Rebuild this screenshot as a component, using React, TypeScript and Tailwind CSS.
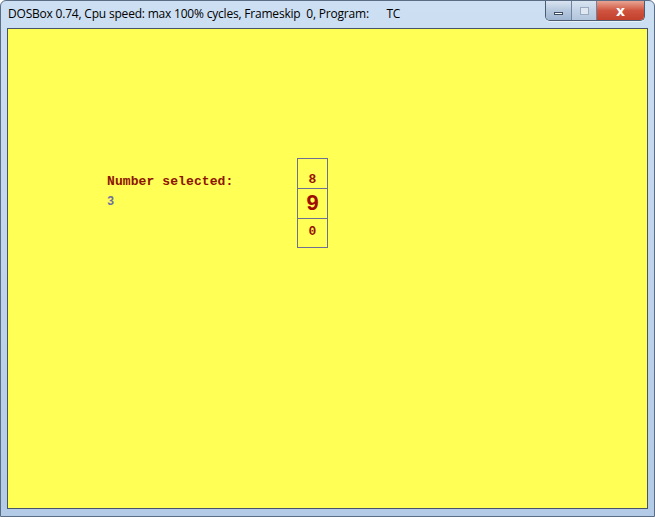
import React from "react"

const mono = { fontFamily: '"Liberation Mono", "DejaVu Sans Mono", monospace' }

function TitleButtons() {
  return (
    <div className="flex h-[20px] self-start overflow-hidden rounded-b-[5px] border border-t-0 border-[#4a5b72] shadow-[0_1px_0_#e8f0f8]">
      <div className="flex w-[26px] items-center justify-center border-r border-[#6f82a0] bg-gradient-to-b from-[#d9e4f1] via-[#b6c8de] to-[#9fb5d1]">
        <div className="mt-[5px] h-[3px] w-[9px] border border-[#3c4c63] bg-white" />
      </div>
      <div className="flex w-[25px] items-center justify-center border-r border-[#6f82a0] bg-gradient-to-b from-[#d9e4f1] via-[#c3d3e6] to-[#b3c6dd]">
        <div className="h-[8px] w-[9px] border border-[#9aaac0] bg-[#dfe7f1]" />
      </div>
      <div className="flex w-[47px] items-center justify-center bg-gradient-to-b from-[#e8a493] via-[#cf5440] to-[#c2402c]">
        <span className="text-[14px] font-bold leading-none text-white" style={{ fontFamily: '"DejaVu Sans", sans-serif' }}>
          x
        </span>
      </div>
    </div>
  )
}

export default function App() {
  return (
    <div className="flex h-[517px] w-[655px] flex-col overflow-hidden rounded-t-[6px] border border-[#5b6d85] bg-gradient-to-b from-[#cddff2] via-[#c0d4ec] to-[#b3cbe6]">
      {/* title bar */}
      <div className="flex h-[27px] shrink-0 items-start justify-between pl-[7px] pr-[9px]">
        <div
          className="mt-[5px] whitespace-pre text-[12px] leading-[15px] text-black"
          style={{ fontFamily: '"Open Sans", "Noto Sans", sans-serif', letterSpacing: "-0.2px" }}
        >
          DOSBox 0.74, Cpu speed: max 100% cycles, Frameskip  0, Program:      TC
        </div>
        <TitleButtons />
      </div>

      {/* client */}
      <div className="flex flex-1 px-[6px] pb-[7px]">
        <div className="flex flex-1 items-start border border-[#47536a] bg-[#ffff55] pl-[99px] pt-[129px]">
          <div className="flex w-[190px] flex-col gap-[4px] pt-[16px]" style={mono}>
            <div className="text-[13px] font-bold leading-[16px] tracking-[0.1px] text-[#8c1400]">Number selected:</div>
            <div className="text-[12px] font-bold leading-[16px] text-[#7070a0]">3</div>
          </div>
          <div className="flex w-[31px] flex-col border border-[#6f6f96]" style={mono}>
            <div className="flex h-[30px] items-end justify-center border-b border-[#6f6f96] pb-[1px] text-[13px] font-bold leading-[14px] text-[#9a1000]">
              8
            </div>
            <div className="flex h-[30px] items-center justify-center border-b border-[#6f6f96] pt-[3px] text-[22px] font-bold leading-[22px] text-[#a00c00]">
              9
            </div>
            <div className="flex h-[28px] items-center justify-center pb-[2px] text-[13px] font-bold leading-[14px] text-[#9a1000]">
              0
            </div>
          </div>
        </div>
      </div>
    </div>
  )
}
